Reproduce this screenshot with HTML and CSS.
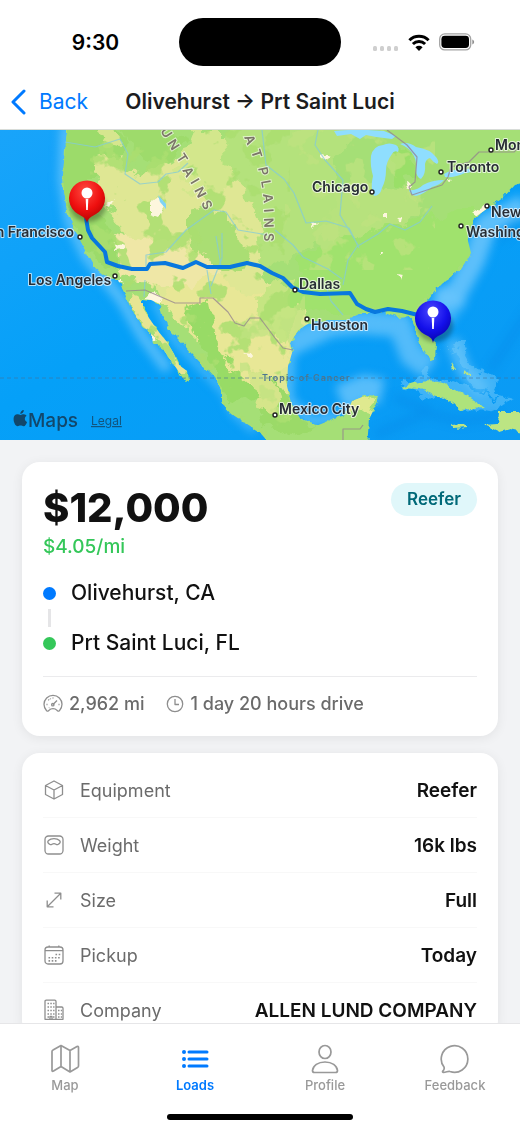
FILE: index.html
```html
<!DOCTYPE html>
<html lang="en">
<head>
  <meta charset="UTF-8">
  <meta name="viewport" content="width=device-width, initial-scale=1.0">
  <title>Load details</title>
  <link rel="stylesheet" href="styles.css">
</head>
<body>
  <div class="screen">

    <!-- Status bar -->
    <div class="status-bar">
      <div class="time">9:30</div>
      <div class="island"></div>
      <div class="status-icons">
        <svg width="27" height="6" viewBox="0 0 27 6" fill="#cfcfcf">
          <rect x="1" y="1" width="4" height="5" rx="1.5"/><rect x="8" y="1" width="4" height="5" rx="1.5"/>
          <rect x="15" y="1" width="4" height="5" rx="1.5"/><rect x="22" y="1" width="4" height="5" rx="1.5"/>
        </svg>
        <svg class="wifi" width="22" height="17" viewBox="0 0 22 17">
          <g fill="none" stroke="#000" stroke-width="3">
            <path d="M1.4 6.3a13.7 13.7 0 0 1 19.2 0"/>
            <path d="M4.9 10a8.7 8.7 0 0 1 12.2 0"/>
          </g>
          <path d="M11 17l-3.6-3.7a5.2 5.2 0 0 1 7.2 0z"/>
        </svg>
        <svg width="36" height="18" viewBox="0 0 36 18">
          <rect x=".7" y=".9" width="31" height="16" rx="5" fill="none" stroke="#a3a3a3" stroke-width="1.3"/>
          <rect x="2.4" y="2.8" width="27.6" height="12.2" rx="3.4"/>
          <path d="M33.3 6.5c2.4.7 2.4 4.3 0 5z" fill="#8f8f8f"/>
        </svg>
      </div>
    </div>

    <!-- Navigation -->
    <header class="nav-bar">
      <a href="#" class="back">
        <svg width="16" height="26" viewBox="0 0 16 26" fill="none" stroke="#007aff" stroke-width="3" stroke-linecap="round" stroke-linejoin="round"><path d="M13 2L2 13l11 11"/></svg>
        Back
      </a>
      <h1>Olivehurst → Prt Saint Luci</h1>
    </header>

    <main class="content">

      <!-- Route map -->
      <svg class="map" viewBox="0 130 520 310" preserveAspectRatio="xMidYMid slice" role="img" aria-label="Route map">
        <defs>
          <linearGradient id="sea" x1="0" y1="0" x2="1" y2="1">
            <stop offset="0" stop-color="#19a4fa"/>
            <stop offset=".45" stop-color="#05a0f8"/>
            <stop offset="1" stop-color="#0b9af4"/>
          </linearGradient>
          <radialGradient id="redPin" cx=".45" cy=".25" r=".8">
            <stop offset="0" stop-color="#ff4a40"/><stop offset=".55" stop-color="#ee0f0f"/><stop offset="1" stop-color="#a80000"/>
          </radialGradient>
          <radialGradient id="bluePin" cx=".45" cy=".25" r=".8">
            <stop offset="0" stop-color="#4a46ff"/><stop offset=".55" stop-color="#1410ea"/><stop offset="1" stop-color="#0400a0"/>
          </radialGradient>
          <filter id="soft" x="-20%" y="-20%" width="140%" height="140%" color-interpolation-filters="sRGB"><feGaussianBlur stdDeviation="5"/></filter>
          <filter id="shade" x="-20%" y="-20%" width="140%" height="140%"><feGaussianBlur stdDeviation="2"/></filter>
          <filter id="coast" color-interpolation-filters="sRGB">
            <feTurbulence type="fractalNoise" baseFrequency=".12" numOctaves="3" seed="4"/>
            <feDisplacementMap in="SourceGraphic" scale="7" xChannelSelector="R" yChannelSelector="G"/>
          </filter>
          <filter id="rough" color-interpolation-filters="sRGB">
            <feTurbulence type="fractalNoise" baseFrequency=".06" numOctaves="4" seed="9"/>
            <feDisplacementMap in="SourceGraphic" scale="24" xChannelSelector="R" yChannelSelector="G"/>
          </filter>
          <filter id="speckle" color-interpolation-filters="sRGB">
            <feTurbulence type="fractalNoise" baseFrequency=".035" numOctaves="4" seed="7"/>
            <feColorMatrix values="0 0 0 0 .67  0 0 0 0 .87  0 0 0 0 .44  20 0 0 0 -11.4"/>
            <feComposite operator="in" in2="SourceGraphic"/>
          </filter>
          <filter id="dryspeckle" color-interpolation-filters="sRGB">
            <feTurbulence type="fractalNoise" baseFrequency=".035" numOctaves="4" seed="21"/>
            <feColorMatrix values="0 0 0 0 .75  0 0 0 0 .89  0 0 0 0 .5  20 0 0 0 -11.6"/>
            <feComposite operator="in" in2="SourceGraphic"/>
          </filter>
          <path id="mainland" d="M67 120L67 133 65 150 63 175 64 192 67 212 74 228 80 240 87 254 95 268 104 275 118 280 124 292 131 307 138 321 149 332 153 342 163 349 170 359 179 372 185 382 188 380 187 371 179 365 174 354 167 342 158 331 149 318 143 308 143 299 151 300 160 304 164 319 171 331 181 341 190 352 202 364 214 377 222 388 222 403 232 414 244 422 258 431 270 445H367L369 420 379 397 365 396 352 401 346 415 331 419 316 425 301 420 291 403 287 386 288 366 292 353 290 343 298 330 311 322 329 320 346 320 355 316 362 312 385 312 398 317 409 316 415 330 421 347 430 361 435 360 436 345 428 330 424 305 437 289 445 281 460 270 471 253 467 237 474 218 488 208 503 198 514 186 530 182V120z"/>
          <clipPath id="landClip"><use href="#mainland"/></clipPath>
        </defs>

        <rect y="130" width="520" height="310" fill="url(#sea)"/>

        <!-- shallow water -->
        <g filter="url(#soft)" fill="none" stroke="#6cc6fb">
          <path d="M66 125L64 180 70 220 86 255 104 278 122 300 142 335 168 370" stroke-width="11" opacity=".8"/>
          <path d="M155 300L175 340 225 392 234 412 255 430" stroke-width="7" opacity=".7"/>
          <path d="M288 345L330 325 360 322 400 325 412 355 430 368" stroke-width="24" opacity=".75"/>
          <path d="M290 350L288 400 312 422 340 416" stroke-width="9" opacity=".8"/>
          <path d="M340 398L365 388 382 392" stroke-width="26" opacity=".8"/>
          <path d="M436 300L455 295 474 260 486 225 525 205" stroke-width="22" opacity=".85"/>
          <path d="M452 340L465 372 485 392" stroke-width="14" opacity=".7"/>
          <path d="M432 300L455 318" stroke-width="40" opacity=".6"/>
        </g>
        <g filter="url(#rough)" fill="#6cc7f9" opacity=".55">
          <path d="M447 343l18 4 8 20 22 12 8 18-20-6-26-28zM400 385l30-13 50 20 30 8-30 12-50-16z"/>
        </g>
        <g filter="url(#soft)" fill="none" stroke="#0584e4" stroke-width="7" opacity=".4">
          <path d="M375 435l50-22 35 8 40-5M395 398l35 12M490 370l40-60M500 240l20-20"/>
        </g>

        <!-- land -->
        <g filter="url(#coast)">
          <use href="#mainland" fill="#a5df76"/>
          <g fill="#bce583">
            <path d="M400 388q20-10 44-5l24 14 17 11-24 2-16-12-24-9z" fill="#aee37b"/>
            <path d="M484 425l13-1 1-12 20 0 10 5v16l-18-4-10 3zM452 425l12-1 4 4-14 1z"/>
            <path d="M452 363l3 8M465 371l5 6" stroke="#b9e483" stroke-width="2"/>
          </g>
        </g>
        <g clip-path="url(#landClip)">
          <g filter="url(#rough)">
            <path d="M225 120H360L335 170 342 220 300 255 262 270 240 240 228 190z" fill="#b4e27c"/>
            <path d="M340 185l70 5 15 20-55 40-45-10z" fill="#b7e27d"/>
            <path d="M88 165l30-10 22 24 40-25 60 30 20 50 5 50 40 20 10 50-10 50-40-20-35-65-60-10-25-40-18-30z" fill="#dfe794"/>
            <path d="M60 120l55 0 10 20-10 20-20 0-7 30 12 22 14 24 4 32-10 3-22-22-26-60z" fill="#9cdb6a"/>
            <path d="M96 128l14-5 10 14-14 10z" fill="#d6e68e"/>
            <path d="M120 120h50l12 20-15 22-30-8-12-16z" fill="#9edb6b"/>
            <path d="M190 130h35l5 50-20 20-20-10-15-20z" fill="#d3e78c"/>
            <path d="M115 235l60 10 50 22-5 18-45 5-50-12z" fill="#efe7a6"/>
            <path d="M190 205l32 8 25 38-5 26-30-8-22-30z" fill="#aade73"/>
            <path d="M125 290l15 5 50 75-3 10-28-35z" fill="#e7e593"/>
            <path d="M205 275l90 35 0 55-45 25-50-50-45-40z" fill="#e8e796"/>
            <path d="M183 310l28-8 4 42 22 30 24 22-32 10-24-60z" fill="#98db66"/>
            <path d="M260 290l30-8 5 30-12 30-25-20z" fill="#c5e582"/>
            <path d="M270 375l15 20 30 30-20 15-35-20z" fill="#9bda68"/>
            <path d="M245 365l24 10 18 40-28-6z" fill="#d5e58a"/>
            <path d="M350 400l25-6-5 18-20 6z" fill="#dfe98f"/>
            <path d="M300 258l45-20 120-30 20 0-10 50-60 55-80 0-45-10z" fill="#a0e26d"/>
            <path d="M393 150l16-6 6 28-10 16-15-3z" fill="#9adf68"/>
          </g>
          <path filter="url(#speckle)" d="M90 130h200v310h-200z" opacity=".85"/>
          <path filter="url(#dryspeckle)" d="M285 130h150v140h-150zM240 290h65v130h-65z" opacity=".7"/>
          <g filter="url(#coast)" fill="#fdf6dd">
            <path d="M150 202l9-6 6 8-7 13-8-3zM106 205l8-6-4 8zM113 245l10-2 3 5-11 2zM142 298l12-6 8 5-6 7zM111 280l10 0 3 5zM150 334l7 6-5 2zM244 353l9 1-2 4zM322 153l7 3-3 5-5-4zM407 182l6 3-3 5-5-3zM383 214l4 0 0 4-4 0zM398 220l4-3-1 5zM472 212l16-8 1 6-12 6zM398 274l5 1-2 6zM380 252l3 2-3 3zM312 222l6 1-4 4zM446 178l6 1-4 3z"/>
          </g>
        </g>

        <!-- lakes and rivers -->
        <g fill="#8fdefe">
          <path d="M334 131l14-1 20 0 16 1 12 5-4 3-16-2-10-2-6 4-9-5-14 2z"/>
          <path d="M371 156q2-10 12-11 6-3 13 0 4 3 2 7-4-2-6 2-6 8-6 16 0 10-4 18-2 8-8 8-4-8-1-20-3-10-2-20z"/>
          <path d="M400 144q8-3 16 3 14 2 20 10 4 5 1 7-4-2-7-6-4 1-5 6 1 10-4 15-5-2-5-10 1-10-4-16-4-6-12-9z"/>
          <path d="M409 190q8 1 14-5 9-5 21-5-4 5-12 7-8 7-16 9-6-1-7-6z"/>
          <path d="M444 174q10-6 20-4 6-2 9-2 0 5-8 5-10 5-20 4z"/>
          <path d="M158 195l8 9 0 5-6-7z" fill="#7fd2f5"/>
        </g>
        <g class="rivers">
          <path d="M65 142l30 5 25-8 8 15-3 20 15 10 18-2 8-8 12-2 10-9M146 271v-16l20-3 20-22 28-20 12 2 12 18 30 5M222 233v25l-11 28M216 236l5 30M262 130l4 35 18 14 10 14 12 30 20-2 23 7 10 20M318 130l-3 15 10 15 18 20-3 35 18 30-10 15-5 25M358 246l20-12 12-10 15 6 15-8 12-16M275 230l18 15 10 12 25 12 14 10M145 280l-1 17M207 270l4 24M326 286l5 15 12 14"/>
        </g>
        <g class="borders">
          <path d="M126 291l19-1 30 13h25v-5h13l15 14 7 11 9 3 6-8h10l15 20 8 10 10 2M387 130l20 15 10 12-2 25-6 5 3 8 30-10 6-8 3-10 18-5 10-10h35l6-6M343 440v-11h17l3-4"/>
        </g>
        <path class="tropic" d="M0 378H520"/>

        <!-- route -->
        <path class="route" d="M86 218L88 230 92 238 105 252 107 262 118 266 132 269 147 269 150 264 165 263 183 268 196 262 207 267 230 267 247 263 260 266 272 273 283 278 292 287 303 292 320 294 350 293 357 304 366 309 375 312 388 309 402 311 418 315 430 322"/>

        <!-- place names -->
        <g class="places">
          <text x="74" y="237" text-anchor="end">n Francisco</text>
          <text x="28" y="285">Los Angeles</text>
          <text x="312" y="192">Chicago</text>
          <text x="447" y="172">Toronto</text>
          <text x="495" y="150">Mon</text>
          <text x="491" y="217">New</text>
          <text x="466" y="237">Washing</text>
          <text x="299" y="289">Dallas</text>
          <text x="311" y="330">Houston</text>
          <text x="279" y="414">Mexico City</text>
        </g>
        <g class="dots">
          <circle cx="80" cy="237" r="2"/><circle cx="115" cy="276" r="2"/><circle cx="372" cy="192" r="2"/>
          <circle cx="441" cy="172" r="2"/><circle cx="491" cy="150" r="2"/><circle cx="487" cy="206" r="2"/>
          <circle cx="461" cy="226" r="2"/><circle cx="295" cy="290" r="2"/><circle cx="307" cy="319" r="2"/>
          <circle cx="275" cy="415" r="2"/>
        </g>
        <g class="regions">
          <text transform="translate(160 131) rotate(57)">U</text>
          <text transform="translate(167 143) rotate(57)">N</text>
          <text transform="translate(176 157) rotate(57)">T</text>
          <text transform="translate(182 170) rotate(60)">A</text>
          <text transform="translate(190 182) rotate(60)">I</text>
          <text transform="translate(194 190) rotate(63)">N</text>
          <text transform="translate(201 203) rotate(64)">S</text>
          <text transform="translate(244 137) rotate(68)">A</text>
          <text transform="translate(251 151) rotate(72)">T</text>
          <text transform="translate(258 168) rotate(78)">P</text>
          <text transform="translate(261 181) rotate(80)">L</text>
          <text transform="translate(263 194) rotate(84)">A</text>
          <text transform="translate(264 209) rotate(86)">I</text>
          <text transform="translate(264 218) rotate(88)">N</text>
          <text transform="translate(264 233) rotate(90)">S</text>
        </g>
        <text class="tropic-name" x="262" y="381">Tropic of Cancer</text>

        <!-- pins -->
        <ellipse cx="88" cy="206" rx="18" ry="16" filter="url(#shade)" opacity=".3"/>
        <path d="M87 223c-1-5-4-6-9-9a18 18 0 1 1 18 0c-5 3-8 4-9 9z" fill="url(#redPin)"/>
        <circle cx="87" cy="193" r="5.5" fill="#fff"/>
        <path d="M85.7 199h2.600l-.5 11h-1.600z" fill="#fff"/>
        <ellipse cx="435" cy="326" rx="18" ry="16" filter="url(#shade)" opacity=".3"/>
        <path d="M433 343c-1-6-4-6-9-9a18 18 0 1 1 18 0c-5 3-8 3-9 9z" fill="url(#bluePin)"/>
        <circle cx="433" cy="312" r="5.5" fill="#fff"/>
        <path d="M431.7 318h2.600l-.5 11h-1.600z" fill="#fff"/>

        <!-- attribution -->
        <g fill="#12476b">
          <path d="M20.500 415c1.300 0 2-.9 3.400-.7 1.200.1 2 .6 2.600 1.400-2.500 1.700-2 5.300.6 6.200-.7 1.900-1.900 4.300-3.500 4.300-1.200 0-1.600-.7-3-.7s-1.800.7-3 .7c-2 0-4-3.800-4-7 0-5.200 4.200-5.600 6.900-4.200zM20.300 414c-.1-2 1.600-3.800 3.500-3.900.2 2.100-1.500 3.900-3.500 3.900z"/>
          <text class="maps-name" x="28" y="427">Maps</text>
        </g>
        <a href="#"><text class="legal" x="91" y="425">Legal</text></a>
      </svg>

      <div class="cards">
        <!-- Rate and route -->
        <section class="card summary">
          <div class="rate-row">
            <div>
              <div class="rate">$12,000</div>
              <div class="per-mile">$4.05/mi</div>
            </div>
            <span class="badge">Reefer</span>
          </div>
          <div class="stops">
            <div class="stop"><span class="dot"></span>Olivehurst, CA</div>
            <div class="connector"></div>
            <div class="stop"><span class="dot dest"></span>Prt Saint Luci, FL</div>
          </div>
          <div class="trip">
            <div class="trip-item">
              <svg width="20" height="20" viewBox="0 0 20 20" class="line-icon">
                <path d="M3.600 16.700a9 9 0 1 1 12.800 0q-1.500 1-2.600-.6c-1.800-2-5.800-2-7.600 0q-1.100 1.600-2.600.6z"/>
                <path d="M10 10.500l4-4M10 3.500v1M5.300 5.500l.8.800M3.500 10.500h1M15.500 10.500h1M6 14l.4-.4M7.300 4.500l.3.800"/>
                <circle cx="9.800" cy="10.700" r="1.200"/>
              </svg>
              2,962 mi
            </div>
            <div class="trip-item">
              <svg width="18" height="18" viewBox="0 0 18 18" class="line-icon"><circle cx="9" cy="9" r="7.700"/><path d="M9 4v5.500h4"/></svg>
              1 day 20 hours drive
            </div>
          </div>
        </section>

        <!-- Load details -->
        <dl class="card details">
          <div class="row">
            <dt>
              <svg width="22" height="22" viewBox="0 0 22 22" class="line-icon"><path d="M11 2l8.500 4.500v9L11 20l-8.500-4.500v-9zM2.500 6.500L11 11l8.500-4.500M11 11v9"/></svg>
              Equipment
            </dt>
            <dd>Reefer</dd>
          </div>
          <div class="row">
            <dt>
              <svg width="22" height="22" viewBox="0 0 22 22" class="line-icon"><rect x="2" y="2" width="18" height="18" rx="3.500"/><path d="M7 10.500Q3.500 8.500 5.500 6.500c2.500-2.500 8.500-2.500 11 0q2 2-1.500 4-1 .5-2-.3-2-1.200-4 0-1 .8-2 .3z"/></svg>
              Weight
            </dt>
            <dd>16k lbs</dd>
          </div>
          <div class="row">
            <dt>
              <svg width="22" height="22" viewBox="0 0 22 22" class="line-icon"><path d="M4.500 17.500l13-13M11.500 4.200h6.300v6.300M4.200 11.500v6.300h6.300"/></svg>
              Size
            </dt>
            <dd>Full</dd>
          </div>
          <div class="row">
            <dt>
              <svg width="22" height="22" viewBox="0 0 22 22" class="line-icon"><rect x="2" y="3" width="18" height="17" rx="3"/><path d="M2 6.700h18M6.200 1.500V3M15.800 1.500V3"/><path d="M12.500 10.500h5M5.500 13.700h12M5.500 16.900h9" stroke-width="1.600" stroke-dasharray="1.600 1.600"/></svg>
              Pickup
            </dt>
            <dd>Today</dd>
          </div>
          <div class="row">
            <dt>
              <svg width="22" height="22" viewBox="0 0 22 22" class="line-icon"><path d="M2 20.300V2.500q0-1.300 1.300-1.300h8.400q1.300 0 1.300 1.300v17.800zM13 8h5.700q1.300 0 1.300 1.300v11h-7"/><path d="M4.500 4.500h7M4.500 8h7M4.500 11.500h7M4.500 15h7M15 11.500h4M15 15h4M15 18h4M4.500 18h2M10 18h2" stroke-width="1.500" stroke-dasharray="1.500 1.300"/><path d="M7 20v-2.500h2V20"/></svg>
              Company
            </dt>
            <dd>ALLEN LUND COMPANY</dd>
          </div>
        </dl>
      </div>
    </main>

    <!-- Tabs -->
    <nav class="tab-bar">
      <div class="tabs">
        <a href="#" class="tab">
          <svg width="32" height="32" viewBox="0 0 32 32"><path d="M3 8.500q0-1 1-1.500l8-4.500 9 5 7-4q1.500-.8 1.500 1V23q0 1-1 1.500L21 29l-9-5.500L4.500 28Q3 28.800 3 27.500zM12 2.500v21M21 7.500V29"/></svg>
          Map
        </a>
        <a href="#" class="tab active">
          <svg width="32" height="32" viewBox="0 0 32 32"><path d="M10 9h18M10 16h18M10 23h18" stroke-width="3"/><g fill="#007aff" stroke="none"><circle cx="5" cy="9" r="2"/><circle cx="5" cy="16" r="2"/><circle cx="5" cy="23" r="2"/></g></svg>
          Loads
        </a>
        <a href="#" class="tab">
          <svg width="32" height="32" viewBox="0 0 32 32"><ellipse cx="16" cy="9" rx="6" ry="6.500"/><path d="M5.500 29.500q-2 0-2-2c.5-5 5.500-8.500 12.500-8.500s12 3.500 12.500 8.500q0 2-2 2z"/></svg>
          Profile
        </a>
        <a href="#" class="tab">
          <svg width="32" height="32" viewBox="0 0 32 32"><path d="M4.500 29.300c-.8.100-1.200-.6-.7-1.200 1.200-1.300 1.700-2.800 1.200-4A13.300 13.300 0 1 1 11 28.500c-1.500-.6-3.500.6-6.500.8z"/></svg>
          Feedback
        </a>
      </div>
      <div class="home-indicator"></div>
    </nav>
  </div>
</body>
</html>
```

FILE: styles.css
```css
* {
  box-sizing: border-box;
}
body {
  margin: 0;
  font-family: 'Inter', 'Liberation Sans', sans-serif;
  background: #fff;
  color: #111;
}
a {
  color: inherit;
  text-decoration: none;
}
.screen {
  display: flex;
  flex-direction: column;
  height: 100vh;
  overflow: hidden;
}

/* status bar */
.status-bar {
  display: grid;
  grid-template-columns: 1fr 162px 1fr;
  align-items: center;
  padding-top: 18px;
}
.time {
  font-size: 21px;
  font-weight: 600;
  color: #000;
  padding-left: 12px;
  text-align: center;
}
.island {
  height: 48px;
  border-radius: 24px;
  background: #000;
}
.status-icons {
  display: flex;
  align-items: center;
  justify-content: flex-end;
  gap: 9px;
  padding-right: 45px;
}
.status-icons svg:first-child {
  margin-top: 12px;
}

/* navigation */
.nav-bar {
  display: grid;
  grid-template-columns: 1fr auto 1fr;
  align-items: center;
  height: 64px;
  padding: 8px 11px 0;
  border-bottom: 1px solid #d8dcd8;
}
.back {
  display: flex;
  align-items: center;
  gap: 12px;
  font-size: 21px;
  color: #007aff;
}
.nav-bar h1 {
  margin: 0;
  font-size: 21px;
  font-weight: 600;
  color: #1c1c1e;
}

/* scrolling part */
.content {
  flex: 1;
  min-height: 0;
  overflow: hidden;
  background: #f2f3f5;
}
.map {
  display: block;
  width: 100%;
  height: 310px;
}
.rivers {
  fill: none;
  stroke: #83cbd8;
  stroke-width: 1.2;
  stroke-linejoin: round;
  opacity: .75;
}
.borders {
  fill: none;
  stroke: #93828f;
  stroke-width: 1.2;
  stroke-linejoin: round;
  opacity: .75;
}
.tropic {
  stroke: #44749a;
  stroke-width: 1;
  stroke-dasharray: 4 3;
  opacity: .6;
}
.route {
  fill: none;
  stroke: #0878de;
  stroke-width: 4;
  stroke-linejoin: round;
}
.places {
  font-size: 14px;
  font-weight: 600;
  fill: #272d35;
  stroke: rgba(255, 255, 255, .7);
  stroke-width: 2px;
  stroke-linejoin: round;
  paint-order: stroke;
}
.dots {
  fill: #fff;
  stroke: #222;
  stroke-width: 1.4;
}
.regions {
  font-size: 13px;
  font-weight: 600;
  fill: #7b7568;
  stroke: rgba(255, 255, 255, .6);
  stroke-width: 2px;
  paint-order: stroke;
}
.tropic-name {
  font-size: 9px;
  font-weight: 600;
  letter-spacing: 1px;
  fill: #4c7690;
}
.maps-name {
  font-size: 19px;
  font-weight: 500;
}
.legal {
  font-size: 12px;
  fill: #12557f;
  text-decoration: underline;
}

/* cards */
.cards {
  display: flex;
  flex-direction: column;
  gap: 17px;
  padding: 22px;
}
.card {
  margin: 0;
  padding: 0 21px;
  background: #fff;
  border-radius: 18px;
  box-shadow: 0 2px 12px rgba(0, 0, 0, .07);
}
.rate-row {
  display: flex;
  justify-content: space-between;
  align-items: flex-start;
  padding-top: 21px;
}
.rate {
  font-size: 40px;
  line-height: 50px;
  font-weight: 800;
}
.per-mile {
  font-size: 19px;
  line-height: 28px;
  font-weight: 500;
  color: #34c759;
}
.badge {
  padding: 0 16px;
  border-radius: 17px;
  background: #e0f7fa;
  color: #006978;
  font-size: 17px;
  line-height: 33px;
  font-weight: 600;
}
.stops {
  padding: 16px 0 17px;
}
.stop {
  display: flex;
  align-items: center;
  gap: 15px;
  font-size: 21px;
  line-height: 32px;
  font-weight: 500;
}
.dot {
  width: 13px;
  height: 13px;
  border-radius: 50%;
  background: #007aff;
}
.dot.dest {
  background: #34c759;
}
.connector {
  width: 3px;
  height: 18px;
  margin-left: 5px;
  background: #e5e5e7;
}
.trip {
  display: flex;
  gap: 22px;
  padding: 12px 0 17px;
  border-top: 1px solid #ebebed;
  font-size: 18px;
  line-height: 30px;
  font-weight: 500;
  color: #6b6b6b;
}
.trip-item {
  display: flex;
  align-items: center;
  gap: 6px;
}
.line-icon {
  fill: none;
  stroke: #8e8e8e;
  stroke-width: 1.3;
  stroke-linecap: butt;
  stroke-linejoin: round;
}
.details {
  padding-top: 10px;
}
.row {
  display: flex;
  justify-content: space-between;
  align-items: center;
  height: 55px;
  border-bottom: 1px solid #f8f8f8;
}
.row dt {
  display: flex;
  align-items: center;
  gap: 15px;
  font-size: 18px;
  color: #6b6b6b;
}
.row dd {
  margin: 0;
  font-size: 19px;
  font-weight: 600;
}

/* tabs */
.tab-bar {
  height: 108px;
  border-top: 1px solid #e6e6e8;
  background: #fff;
}
.tabs {
  display: grid;
  grid-template-columns: repeat(4, 1fr);
  padding-top: 19px;
}
.tab {
  display: flex;
  flex-direction: column;
  align-items: center;
  gap: 2px;
  font-size: 13px;
  line-height: 16px;
  font-weight: 500;
  color: #999;
}
.tab svg {
  fill: none;
  stroke: #999;
  stroke-width: 1.7;
  stroke-linecap: round;
  stroke-linejoin: round;
}
.tab.active {
  font-weight: 600;
  color: #007aff;
}
.tab.active svg {
  stroke: #007aff;
}
.home-indicator {
  width: 186px;
  height: 6px;
  margin: 21px auto 0;
  border-radius: 3px;
  background: #000;
}
```
